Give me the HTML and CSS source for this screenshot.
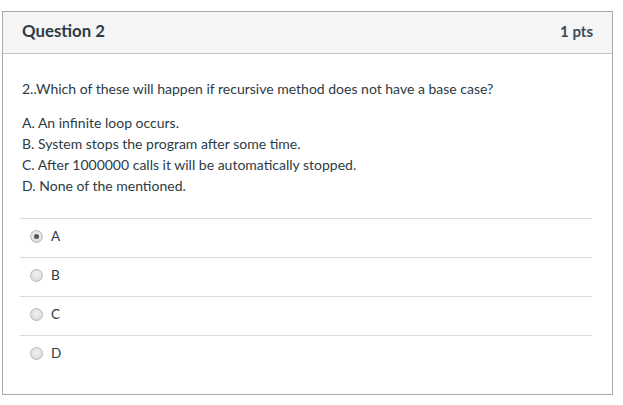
FILE: index.html
```html
<!DOCTYPE html>
<html>
<head>
<meta charset="utf-8">
<link rel="stylesheet" href="styles.css">
</head>
<body>
<div class="question">
  <div class="q-header">
    <span class="q-title">Question 2</span>
    <span class="q-points">1 pts</span>
  </div>
  <div class="q-body">
    <p class="q-text">2..Which of these will happen if recursive method does not have a base case?</p>
    <div class="q-options">
      <div>A. An infinite loop occurs.</div>
      <div>B. System stops the program after some time.</div>
      <div>C. After 1000000 calls it will be automatically stopped.</div>
      <div>D. None of the mentioned.</div>
    </div>
    <div class="answers">
      <div class="answer"><span class="radio checked"></span><span class="label">A</span></div>
      <div class="answer"><span class="radio"></span><span class="label">B</span></div>
      <div class="answer"><span class="radio"></span><span class="label">C</span></div>
      <div class="answer"><span class="radio"></span><span class="label">D</span></div>
    </div>
  </div>
</div>
</body>
</html>
```

FILE: styles.css
```css
html, body {
  margin: 0;
  padding: 0;
  background: #fff;
}
body {
  padding: 11px 10px 0 2px;
  font-family: Lato, "Liberation Sans", sans-serif;
  color: #2d3b45;
}
.question {
  width: 609px;
  height: 382px;
  border: 1px solid #ababab;
  box-sizing: content-box;
}
.q-header {
  display: flex;
  justify-content: space-between;
  align-items: center;
  height: 37px;
  padding: 0 19px 4px 19px;
  background: #f5f5f5;
  border-bottom: 1px solid #c4c4c4;
}
.q-title {
  font-size: 16.8px;
  font-weight: bold;
  color: #2d3b45;
}
.q-points {
  font-size: 15px;
  font-weight: bold;
  color: #3c4a55;
}
.q-body {
  padding: 0 20px 0 17px;
}
.q-text {
  margin: 25px 0 0 2px;
  font-size: 14px;
  line-height: 20px;
}
.q-options {
  margin: 13px 0 0 2px;
  font-size: 14px;
  line-height: 21px;
}
.answers {
  margin-top: 22px;
}
.answer {
  display: flex;
  align-items: center;
  height: 34px;
  padding-bottom: 4px;
  border-top: 1px solid #dadada;
  padding-left: 10px;
}
.radio {
  width: 11px;
  height: 11px;
  border-radius: 50%;
  border: 1px solid #b8b8b8;
  background: radial-gradient(circle at 50% 40%, #f2f2f2, #d4d4d4);
  display: flex;
  align-items: center;
  justify-content: center;
}
.radio.checked::after {
  content: "";
  width: 5px;
  height: 5px;
  border-radius: 50%;
  background: #555;
}
.label {
  margin-left: 8px;
  font-size: 13.5px;
  color: #2d3b45;
}
```
